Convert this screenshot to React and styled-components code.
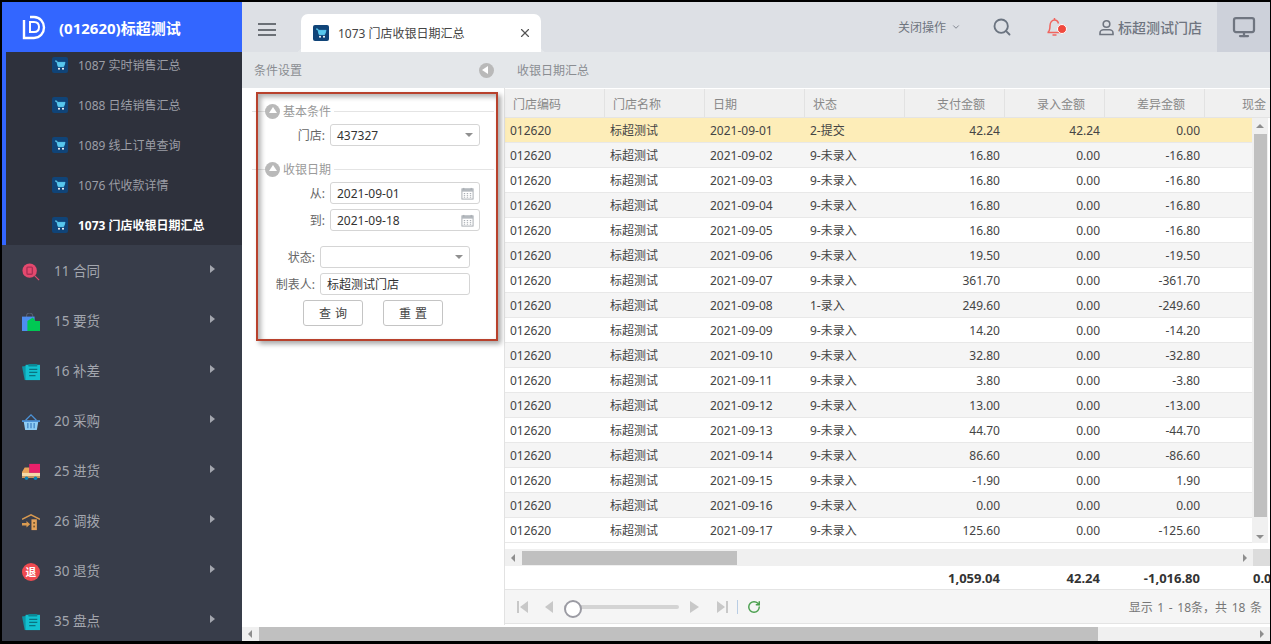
import styled, { createGlobalStyle } from 'styled-components';
import { Search, Monitor, RotateCw, ChevronDown, X } from 'lucide-react';

const GlobalStyle = createGlobalStyle`
  html, body { margin: 0; padding: 0; height: 100%; overflow: hidden; }
  body { font-family: "Noto Sans", "Noto Sans CJK SC", sans-serif; font-size: 12px; color: #333; }
  * { box-sizing: border-box; }
`;

const Frame = styled.div`
  width: 1271px;
  height: 644px;
  border: solid #000;
  border-width: 2px 1px 3px 2px;
  display: flex;
  overflow: hidden;
  background: #fff;
`;

const Sidebar = styled.aside`
  width: 240px;
  flex: none;
  display: flex;
  flex-direction: column;
  background: #383d4a;
  overflow: hidden;
`;

const Brand = styled.div`
  height: 50px;
  flex: none;
  background: #3366ff;
  display: flex;
  align-items: center;
  padding-left: 20px;
  gap: 13px;
  color: #fff;
  font-size: 15px;
  font-weight: 700;
`;

const SubMenu = styled.div`
  height: 193px;
  flex: none;
  background: #2e313c;
  border-left: 4px solid #3366ff;
  overflow: hidden;
`;

const SubList = styled.div`
  margin-top: -7px;
`;

const SubItem = styled.div`
  height: 40px;
  display: flex;
  align-items: center;
  padding-left: 46px;
  gap: 10px;
  font-size: 12px;
  color: ${(p) => (p.$active ? '#fff' : '#9c9ea6')};
  font-weight: ${(p) => (p.$active ? 700 : 400)};
`;

const MenuItem = styled.div`
  height: 50px;
  flex: none;
  display: flex;
  align-items: center;
  padding-left: 20px;
  font-size: 13.5px;
  color: #a3a6ae;
`;

const MenuIcon = styled.span`
  display: flex;
  margin-top: 4px;
`;

const MenuLabel = styled.span`
  margin-left: 14px;
  flex: 1;
`;

const MenuArrow = styled.i`
  width: 0;
  height: 0;
  border-left: 5px solid #a3a6ae;
  border-top: 4.5px solid transparent;
  border-bottom: 4.5px solid transparent;
  margin-right: 27px;
  margin-top: -3px;
`;

const Main = styled.main`
  flex: 1;
  min-width: 0;
  display: flex;
  flex-direction: column;
`;

const TopBar = styled.header`
  height: 50px;
  flex: none;
  background: #dde0e5;
  display: flex;
  align-items: flex-end;
`;

const Burger = styled.div`
  width: 18px;
  height: 13px;
  margin: 0 25px 16px 16px;
  border-top: 2px solid #6b7076;
  border-bottom: 2px solid #6b7076;
  position: relative;
  &::after {
    content: '';
    position: absolute;
    left: 0;
    right: 0;
    top: 3.5px;
    height: 2px;
    background: #6b7076;
  }
`;

const Tab = styled.div`
  width: 240px;
  height: 38px;
  background: #fff;
  border-radius: 7px 7px 0 0;
  display: flex;
  align-items: center;
  padding: 0 9px 0 12px;
  gap: 9px;
  font-size: 12px;
  color: #444;
  position: relative;
  &::before, &::after {
    content: '';
    position: absolute;
    bottom: 0;
    width: 6px;
    height: 6px;
  }
  &::before {
    left: -6px;
    background: radial-gradient(circle at 0 0, transparent 6px, #e4e7ea 6.5px);
  }
  &::after {
    right: -6px;
    background: radial-gradient(circle at 100% 0, transparent 6px, #e4e7ea 6.5px);
  }
`;

const TabTitle = styled.span`
  flex: 1;
`;

const TopRight = styled.div`
  margin-left: auto;
  height: 50px;
  display: flex;
  align-items: center;
`;

const CloseOps = styled.div`
  display: flex;
  align-items: center;
  gap: 5px;
  color: #6f7580;
  font-size: 12px;
  margin-right: 31px;
`;

const TopIcon = styled.div`
  display: flex;
  margin-right: ${(p) => p.$gap}px;
  position: relative;
`;

const BellDot = styled.i`
  position: absolute;
  right: -2px;
  top: 7px;
  width: 8px;
  height: 8px;
  background: #f0493e;
  border-radius: 50%;
  border: 1px solid #fff;
  box-sizing: content-box;
`;

const UserName = styled.div`
  display: flex;
  align-items: center;
  gap: 3px;
  font-size: 14px;
  font-weight: 500;
  color: #6f7580;
  margin-right: 15px;
`;

const ScreenBtn = styled.div`
  width: 53px;
  height: 50px;
  background: #cdd1da;
  display: flex;
  align-items: center;
  justify-content: center;
`;

const SubHeader = styled.div`
  height: 36px;
  flex: none;
  background: #e4e7ea;
  display: flex;
  align-items: center;
  color: #8a8d92;
  font-size: 12px;
`;

const SubLeft = styled.div`
  width: 263px;
  display: flex;
  align-items: center;
  justify-content: space-between;
  padding: 0 11px 0 12px;
`;

const CollapseBtn = styled.i`
  width: 15px;
  height: 15px;
  border-radius: 50%;
  background: #b9b9b9;
  position: relative;
  &::after {
    content: '';
    position: absolute;
    left: 3px;
    top: 3.5px;
    border-right: 6px solid #fff;
    border-top: 4px solid transparent;
    border-bottom: 4px solid transparent;
  }
`;

const SubRight = styled.div`
  padding-left: 12px;
`;

const Content = styled.div`
  flex: 1;
  min-height: 0;
  display: flex;
`;

const FilterPanel = styled.section`
  width: 263px;
  flex: none;
  background: #fff;
  border-right: 1px solid #e2e2e2;
  padding: 15px 10px 0 10px;
  position: relative;
`;

const Annotation = styled.div`
  position: absolute;
  left: 14px;
  top: 4px;
  width: 242px;
  height: 249px;
  border: 2px solid #b8412c;
  box-shadow: 3px 3px 5px rgba(0, 0, 0, 0.35), inset 3px 3px 5px rgba(0, 0, 0, 0.3);
  pointer-events: none;
`;

const SectionTitle = styled.div`
  height: 16px;
  display: flex;
  align-items: center;
  color: #9a9a9a;
  font-size: 12px;
  margin-bottom: ${(p) => p.$mb}px;
  &::after {
    content: '';
    flex: 1;
    height: 1px;
    background: #e4e4e4;
    margin-left: 3px;
  }
  &::before {
    content: '';
    width: 13px;
    height: 1px;
    background: #e4e4e4;
  }
`;

const SectionIcon = styled.i`
  width: 15px;
  height: 15px;
  border-radius: 50%;
  background: #b9b9b9;
  margin-right: 3px;
  position: relative;
  &::after {
    content: '';
    position: absolute;
    left: 3.5px;
    top: 3.5px;
    border-bottom: 6px solid #fff;
    border-left: 4px solid transparent;
    border-right: 4px solid transparent;
  }
`;

const FieldRow = styled.div`
  display: flex;
  align-items: center;
  height: 22px;
  margin-bottom: ${(p) => p.$mb ?? 5}px;
`;

const FieldLabel = styled.label`
  width: ${(p) => p.$w}px;
  text-align: right;
  padding-right: 5px;
  color: #666;
  font-size: 12px;
  flex: none;
`;

const FieldBox = styled.div`
  width: 150px;
  height: 22px;
  border: 1px solid #d5d5d5;
  border-radius: 3px;
  display: flex;
  align-items: center;
  justify-content: space-between;
  padding: 0 4px 0 6px;
  color: #333;
  font-size: 12px;
`;

const DropArrow = styled.i`
  border-top: 4px solid #909090;
  border-left: 4px solid transparent;
  border-right: 4px solid transparent;
  margin-right: 2px;
`;

const ButtonRow = styled.div`
  display: flex;
  justify-content: center;
  gap: 20px;
`;

const Button = styled.button`
  width: 60px;
  height: 26px;
  background: #fff;
  border: 1px solid #c4c4c4;
  border-radius: 3px;
  font: inherit;
  font-size: 12px;
  color: #444;
  letter-spacing: 4px;
  padding: 0 0 0 4px;
`;

const GridWrap = styled.section`
  flex: 1;
  min-width: 0;
  display: flex;
  flex-direction: column;
  padding-top: 1px;
`;

const HeadRow = styled.div`
  height: 29px;
  flex: none;
  display: flex;
  background: #f0f0f0;
  border-bottom: 1px solid #e4e4e4;
  overflow: hidden;
  color: #888;
`;

const HeadCell = styled.div`
  width: 100px;
  flex: none;
  display: flex;
  align-items: center;
  border-right: 1px solid #e2e2e2;
  padding: ${(p) => (p.$right ? '1px 19px 0 0' : '1px 0 0 8px')};
  justify-content: ${(p) => (p.$right ? 'flex-end' : 'flex-start')};
  &:last-child {
    border-right: 0;
    justify-content: flex-start;
    padding-left: 37px;
  }
`;

const BodyWrap = styled.div`
  height: 425px;
  flex: none;
  display: flex;
`;

const Rows = styled.div`
  width: 747px;
  flex: none;
  overflow: hidden;
`;

const Row = styled.div`
  height: 25px;
  display: flex;
  align-items: center;
  border-bottom: 1px solid #e8e8e8;
  background: ${(p) => p.$bg};
  color: #444;
`;

const Cell = styled.div`
  width: 100px;
  flex: none;
  padding: 0 5px;
  white-space: nowrap;
  text-align: ${(p) => (p.$right ? 'right' : 'left')};
`;

const VScroll = styled.div`
  width: 16px;
  flex: none;
  background: #f0f0f0;
  display: flex;
  flex-direction: column;
  align-items: center;
  padding: 6px 0 4px;
`;

const VThumb = styled.div`
  width: 13px;
  height: 383px;
  margin: 6px 0 auto;
  background: #c0c0c0;
`;

const ArrowUp = styled.i`
  border-bottom: 4px solid #8e8e8e;
  border-left: 4px solid transparent;
  border-right: 4px solid transparent;
`;

const ArrowDown = styled.i`
  border-top: 4px solid #8e8e8e;
  border-left: 4px solid transparent;
  border-right: 4px solid transparent;
`;

const ArrowLeft = styled.i`
  border-right: 4px solid #8e8e8e;
  border-top: 4px solid transparent;
  border-bottom: 4px solid transparent;
`;

const ArrowRight = styled.i`
  border-left: 4px solid #8e8e8e;
  border-top: 4px solid transparent;
  border-bottom: 4px solid transparent;
`;

const HScrollGap = styled.div`
  height: 6px;
  flex: none;
`;

const HScroll = styled.div`
  height: 17px;
  flex: none;
  display: flex;
  align-items: center;
  background: #f0f0f0;
  padding-left: 6px;
`;

const HThumb = styled.div`
  width: 215px;
  height: 14px;
  margin-left: 7px;
  background: #c0c0c0;
`;

const HRightArrow = styled.div`
  margin-left: auto;
  margin-right: ${(p) => p.$mr}px;
  display: flex;
`;

const Corner = styled.div`
  width: 17px;
  height: 17px;
  background: #dcdcdc;
`;

const SumRow = styled.div`
  height: 24px;
  flex: none;
  display: flex;
  align-items: center;
  overflow: hidden;
  font-weight: 700;
  font-size: 13px;
  color: #333;
  border-bottom: 1px solid #e4e4e4;
`;

const SumCell = styled(Cell)`
  &:last-child {
    text-align: left;
    padding-left: 48px;
  }
`;

const Pager = styled.div`
  height: 34px;
  flex: none;
  display: flex;
  align-items: center;
  background: #f5f5f5;
  border-bottom: 1px solid #e4e4e4;
  padding: 0 8px 0 12px;
  color: #777;
`;

const PagerBtn = styled.svg`
  width: 12px;
  height: 14px;
  flex: none;
  margin-right: ${(p) => p.$gap}px;
  fill: #c8c8c8;
`;

const Slider = styled.div`
  width: 115px;
  height: 4px;
  background: #d4d4d4;
  border-radius: 2px;
  position: relative;
  margin-right: 9px;
  &::before {
    content: '';
    position: absolute;
    left: 0;
    top: -5px;
    width: 14px;
    height: 14px;
    border-radius: 50%;
    border: 2px solid #9b9ba3;
    background: #fff;
  }
`;

const PagerSep = styled.div`
  width: 1px;
  height: 14px;
  background: #b9cde4;
  margin-right: 9px;
`;

const PagerInfo = styled.div`
  margin-left: auto;
  word-spacing: 1.5px;
`;

const PageScroll = styled.div`
  height: 14px;
  flex: none;
  margin-top: 2px;
  display: flex;
  align-items: center;
  background: #f0f0f0;
  padding: 0 6px;
`;

const PageThumb = styled.div`
  width: 839px;
  height: 14px;
  margin-left: 7px;
  background: #c0c0c0;
`;

const MainBody = styled.div`
  flex: 1;
  min-height: 0;
  display: flex;
  flex-direction: column;
`;

const CartIcon = () => (
  <svg width="16" height="16" viewBox="0 0 16 16" style={{ flex: 'none' }}>
    <rect width="16" height="16" rx="2" fill="#104478" />
    <path d="M3 4h1.800l1.400 5.600h5.400L13 5.400H5.200" fill="#58c8ee" stroke="#58c8ee" strokeWidth="1" />
    <circle cx="7" cy="11.800" r="1" fill="#fff" />
    <circle cx="11" cy="11.800" r="1" fill="#fff" />
  </svg>
);

const CalendarIcon = () => (
  <svg width="13" height="13" viewBox="0 0 14 14" style={{ flex: 'none', marginRight: 1 }}>
    <rect x="1" y="2" width="12" height="11" fill="#fff" stroke="#a3a8ae" />
    <rect x="1" y="2" width="12" height="3" fill="#b4b9be" />
    <path d="M3 1v2M11 1v2" stroke="#a3a8ae" />
    <path d="M3 7h1.500M6.200 7h1.500M9.500 7H11M3 9h1.500M6.200 9h1.500M9.500 9H11M3 11h1.500M6.200 11h1.500M9.500 11H11" stroke="#a3a8ae" />
  </svg>
);

const UserIcon = () => (
  <svg width="17" height="17" viewBox="0 0 17 17" fill="none" stroke="#6f7580" strokeWidth="1.600">
    <circle cx="8.500" cy="5" r="3.300" />
    <path d="M2 15.500v-1.500c0-2 2-3.200 3.500-3.200h6c1.500 0 3.500 1.200 3.500 3.200v1.500z" />
  </svg>
);

const Logo = () => (
  <svg width="24" height="26" viewBox="0 0 24 26" fill="none" stroke="#fff" strokeWidth="2.400">
    <path d="M2 6v18h10c6 0 10-5 10-10.500S18 3 12 3H8" />
    <path d="M8 8v10h4c3 0 5-2 5-5s-2-5-5-5H8z" strokeWidth="2" />
  </svg>
);

const ICONS = {
  contract: (
    <svg width="18" height="18" viewBox="0 0 20 20">
      <circle cx="8.500" cy="8.500" r="8" fill="#e4496e" />
      <rect x="5.500" y="4.500" width="6" height="8" rx="1" fill="none" stroke="#a92f55" strokeWidth="1.500" />
      <path d="M14 14l5 5" stroke="#e4496e" strokeWidth="1.300" />
    </svg>
  ),
  order: (
    <svg width="18" height="18" viewBox="0 0 20 20">
      <path d="M5 5V3.500a3.500 3.500 0 0 1 7 0V5" fill="none" stroke="#565f70" strokeWidth="1.200" />
      <path d="M0 4h14v16H0z" fill="#4e8df0" />
      <path d="M12 5l3 4h5v11H6V9z" fill="#00c853" />
    </svg>
  ),
  sheet: (
    <svg width="18" height="18" viewBox="0 0 20 20">
      <path d="M0 4l3 15h9L6 3z" fill="#0e96a6" />
      <rect x="4" y="2" width="16" height="17" fill="#12c0cf" />
      <rect x="7" y="1" width="10" height="3" rx="1" fill="#0c8795" />
      <path d="M8 7h9M8 10.500h9M8 14h7" stroke="#0a7280" strokeWidth="1.300" />
    </svg>
  ),
  basket: (
    <svg width="18" height="18" viewBox="0 0 20 20">
      <path d="M4 8l6-6 6 6" fill="none" stroke="#4d93d8" strokeWidth="1.400" />
      <path d="M0 8h20v2H0z" fill="#4d93d8" />
      <path d="M2 10h16l-1.500 9h-13z" fill="#8fcdf5" />
      <path d="M6.500 11v6M10 11v6M13.500 11v6" stroke="#3c7fc0" strokeWidth="1.300" />
    </svg>
  ),
  truck: (
    <svg width="18" height="18" viewBox="0 0 20 20">
      <rect x="8" y="1" width="12" height="10" fill="#e9206a" />
      <path d="M0 10l3-5h5v6H0z" fill="#e8a45a" />
      <rect y="11" width="20" height="4" fill="#f5d9a8" />
      <rect y="15" width="20" height="1.500" fill="#e8a45a" />
      <circle cx="5" cy="17" r="2" fill="#0c84b8" />
      <circle cx="15" cy="17" r="2" fill="#0c84b8" />
    </svg>
  ),
  transfer: (
    <svg width="18" height="18" viewBox="0 0 20 20">
      <path d="M0 7l10-5 10 5" fill="none" stroke="#d99a50" strokeWidth="1.600" />
      <rect x="10.500" y="7" width="6" height="12" fill="#e4a25a" />
      <path d="M0 11h5v-2l4 3.500-4 3.500v-2H0z" fill="#d99a50" />
      <rect x="12.500" y="10" width="2" height="2" fill="#7a5a30" />
      <rect x="12.500" y="14" width="2" height="2" fill="#7a5a30" />
    </svg>
  ),
  refund: (
    <svg width="18" height="18" viewBox="0 0 20 20">
      <circle cx="10" cy="10" r="10" fill="#ef4a50" />
      <text x="10" y="14.500" textAnchor="middle" fontSize="12" fontWeight="700" fill="#fff">退</text>
    </svg>
  ),
};

const SUB_ITEMS = ['1087 实时销售汇总', '1088 日结销售汇总', '1089 线上订单查询', '1076 代收款详情', '1073 门店收银日期汇总'];

const MENU_ITEMS = [
  ['11 合同', 'contract'],
  ['15 要货', 'order'],
  ['16 补差', 'sheet'],
  ['20 采购', 'basket'],
  ['25 进货', 'truck'],
  ['26 调拨', 'transfer'],
  ['30 退货', 'refund'],
  ['35 盘点', 'sheet'],
];

const HEADERS = [
  ['门店编码'],
  ['门店名称'],
  ['日期'],
  ['状态'],
  ['支付金额', true],
  ['录入金额', true],
  ['差异金额', true],
  ['现金'],
];

const ROWS = [
  ['01', '2-提交', '42.24', '42.24', '0.00'],
  ['02', '9-未录入', '16.80', '0.00', '-16.80'],
  ['03', '9-未录入', '16.80', '0.00', '-16.80'],
  ['04', '9-未录入', '16.80', '0.00', '-16.80'],
  ['05', '9-未录入', '16.80', '0.00', '-16.80'],
  ['06', '9-未录入', '19.50', '0.00', '-19.50'],
  ['07', '9-未录入', '361.70', '0.00', '-361.70'],
  ['08', '1-录入', '249.60', '0.00', '-249.60'],
  ['09', '9-未录入', '14.20', '0.00', '-14.20'],
  ['10', '9-未录入', '32.80', '0.00', '-32.80'],
  ['11', '9-未录入', '3.80', '0.00', '-3.80'],
  ['12', '9-未录入', '13.00', '0.00', '-13.00'],
  ['13', '9-未录入', '44.70', '0.00', '-44.70'],
  ['14', '9-未录入', '86.60', '0.00', '-86.60'],
  ['15', '9-未录入', '-1.90', '0.00', '1.90'],
  ['16', '9-未录入', '0.00', '0.00', '0.00'],
  ['17', '9-未录入', '125.60', '0.00', '-125.60'],
];

const rowBg = (i) => {
  if (i === 0) return '#fdedb8';
  return i % 2 === 1 ? '#f5f5f5' : '#fff';
};

const App = () => (
  <Frame>
    <GlobalStyle />
    <Sidebar>
      <Brand>
        <Logo />
        <span>(012620)标超测试</span>
      </Brand>
      <SubMenu>
        <SubList>
          {SUB_ITEMS.map((name, i) => (
            <SubItem key={name} $active={i === SUB_ITEMS.length - 1}>
              <CartIcon />
              {name}
            </SubItem>
          ))}
        </SubList>
      </SubMenu>
      {MENU_ITEMS.map(([name, icon]) => (
        <MenuItem key={name}>
          <MenuIcon>{ICONS[icon]}</MenuIcon>
          <MenuLabel>{name}</MenuLabel>
          <MenuArrow />
        </MenuItem>
      ))}
    </Sidebar>
    <Main>
      <TopBar>
        <Burger />
        <Tab>
          <CartIcon />
          <TabTitle>1073 门店收银日期汇总</TabTitle>
          <X size={14} color="#555" strokeWidth={2} />
        </Tab>
        <TopRight>
          <CloseOps>
            关闭操作
            <ChevronDown size={10} />
          </CloseOps>
          <TopIcon $gap={33}>
            <Search size={20} color="#6b7480" strokeWidth={2.250} />
          </TopIcon>
          <TopIcon $gap={33}>
            <svg width="20" height="20" viewBox="0 0 20 20" fill="none" stroke="#f0655f" strokeWidth="1.500">
              <path d="M3 15.500c2-2 2-4 2-7 0-3 2-5.500 4.500-5.500 2 0 3.500 1.500 4 3.500" />
              <path d="M14 10c0 2.500 1 4 2.500 5.500h-14" />
              <path d="M7.500 18h4" />
              <path d="M9.500 3V1" />
            </svg>
            <BellDot />
          </TopIcon>
          <UserName>
            <UserIcon />
            标超测试门店
          </UserName>
          <ScreenBtn>
            <Monitor size={24} color="#6f7580" strokeWidth={2.250} />
          </ScreenBtn>
        </TopRight>
      </TopBar>
      <SubHeader>
        <SubLeft>
          条件设置
          <CollapseBtn />
        </SubLeft>
        <SubRight>收银日期汇总</SubRight>
      </SubHeader>
      <MainBody>
        <Content>
          <FilterPanel>
            <SectionTitle $mb={5}>
              <SectionIcon />
              基本条件
            </SectionTitle>
            <FieldRow $mb={15}>
              <FieldLabel $w={78}>门店:</FieldLabel>
              <FieldBox>
                437327
                <DropArrow />
              </FieldBox>
            </FieldRow>
            <SectionTitle $mb={5}>
              <SectionIcon />
              收银日期
            </SectionTitle>
            <FieldRow>
              <FieldLabel $w={78}>从:</FieldLabel>
              <FieldBox>
                2021-09-01
                <CalendarIcon />
              </FieldBox>
            </FieldRow>
            <FieldRow $mb={15}>
              <FieldLabel $w={78}>到:</FieldLabel>
              <FieldBox>
                2021-09-18
                <CalendarIcon />
              </FieldBox>
            </FieldRow>
            <FieldRow>
              <FieldLabel $w={68}>状态:</FieldLabel>
              <FieldBox>
                <span />
                <DropArrow />
              </FieldBox>
            </FieldRow>
            <FieldRow>
              <FieldLabel $w={68}>制表人:</FieldLabel>
              <FieldBox>标超测试门店</FieldBox>
            </FieldRow>
            <ButtonRow>
              <Button>查询</Button>
              <Button>重置</Button>
            </ButtonRow>
            <Annotation />
          </FilterPanel>
          <GridWrap>
            <HeadRow>
              {HEADERS.map(([name, right]) => (
                <HeadCell key={name} $right={right}>
                  {name}
                </HeadCell>
              ))}
            </HeadRow>
            <BodyWrap>
              <Rows>
                {ROWS.map((r, i) => (
                  <Row key={r[0]} $bg={rowBg(i)}>
                    <Cell>012620</Cell>
                    <Cell>标超测试</Cell>
                    <Cell>2021-09-{r[0]}</Cell>
                    <Cell>{r[1]}</Cell>
                    <Cell $right>{r[2]}</Cell>
                    <Cell $right>{r[3]}</Cell>
                    <Cell $right>{r[4]}</Cell>
                  </Row>
                ))}
              </Rows>
              <VScroll>
                <ArrowUp />
                <VThumb />
                <ArrowDown />
              </VScroll>
            </BodyWrap>
            <HScrollGap />
            <HScroll>
              <ArrowLeft />
              <HThumb />
              <HRightArrow $mr={6}>
                <ArrowRight />
              </HRightArrow>
              <Corner />
            </HScroll>
            <SumRow>
              <Cell />
              <Cell />
              <Cell />
              <Cell />
              <Cell $right>1,059.04</Cell>
              <Cell $right>42.24</Cell>
              <Cell $right>-1,016.80</Cell>
              <SumCell>0.00</SumCell>
            </SumRow>
            <Pager>
              <PagerBtn viewBox="0 0 12 14" $gap={14}>
                <path d="M0 1h2v12H0zM11 1v12L3 7z" />
              </PagerBtn>
              <PagerBtn viewBox="0 0 12 14" $gap={9}>
                <path d="M10 1v12L2 7z" />
              </PagerBtn>
              <Slider />
              <PagerBtn viewBox="0 0 12 14" $gap={16}>
                <path d="M2 1v12l9-6z" />
              </PagerBtn>
              <PagerBtn viewBox="0 0 12 14" $gap={9}>
                <path d="M1 1v12l8-6zM10 1h2v12h-2z" />
              </PagerBtn>
              <PagerSep />
              <RotateCw size={14} color="#4ba04f" strokeWidth={2.500} />
              <PagerInfo>显示 1 - 18条，共 18 条</PagerInfo>
            </Pager>
          </GridWrap>
        </Content>
        <PageScroll>
          <ArrowLeft />
          <PageThumb />
          <HRightArrow $mr={0}>
            <ArrowRight />
          </HRightArrow>
        </PageScroll>
      </MainBody>
    </Main>
  </Frame>
);

export default App;
